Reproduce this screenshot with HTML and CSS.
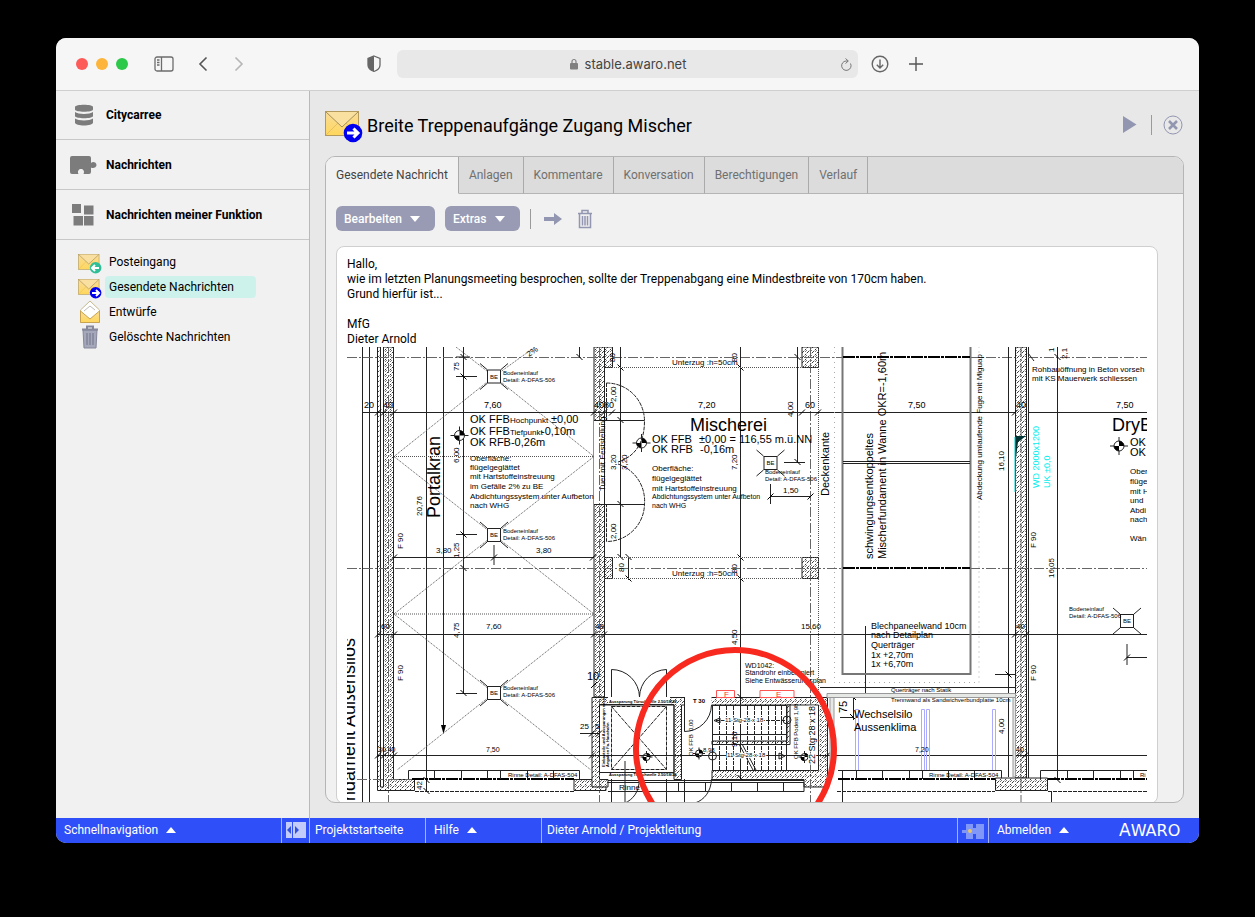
FILE: index.html
```html
<!DOCTYPE html>
<html lang="de">

<head>
    <meta charset="UTF-8">
    <meta name="viewport" content="width=device-width, initial-scale=1.0">
    <title>Breite Treppenaufgänge Zugang Mischer</title>
    <link rel="stylesheet" href="styles.css">
</head>

<body>
    <!-- shared icons -->
    <svg class="defs" width="0" height="0" aria-hidden="true">
        <defs>
            <linearGradient id="paper" x1="0" y1="0" x2="0" y2="1">
                <stop offset="0" stop-color="#f8dc9a" />
                <stop offset="1" stop-color="#ffd75c" />
            </linearGradient>
            <symbol id="mail" viewBox="0 0 38 32">
                <rect x="0.5" y="0.5" width="33" height="24" fill="url(#paper)" stroke="#b39a5c" />
                <path d="M1 24L13 12M33 24L21 12" stroke="#e9c061" fill="none" />
                <path d="M1 1L17 16L33 1" fill="#f9e0a0" stroke="#a58f5a" />
                <circle cx="28" cy="22" r="9.300" fill="currentColor" />
            </symbol>
        </defs>
    </svg>

    <div class="window">
        <header class="browser-bar">
            <div class="lights"><i class="red"></i><i class="yellow"></i><i class="green"></i></div>
            <button class="bar-btn sidebar-btn" aria-label="Seitenleiste">
                <svg width="20" height="16" fill="none" stroke="#6c6c6c" stroke-width="1.3">
                    <rect x="1" y="1" width="18" height="14" rx="2" />
                    <path d="M7.500 1V15M3 4H5.500M3 6.500H5.500M3 9H5.500" />
                </svg>
            </button>
            <button class="bar-btn" aria-label="Zurück">
                <svg width="10" height="16" fill="none" stroke="#555" stroke-width="1.600">
                    <path d="M8.500 1.500L2 8L8.500 14.500" />
                </svg>
            </button>
            <button class="bar-btn" aria-label="Vor">
                <svg width="10" height="16" fill="none" stroke="#b5b5b5" stroke-width="1.600">
                    <path d="M1.500 1.500L8 8L1.500 14.500" />
                </svg>
            </button>
            <button class="bar-btn shield" aria-label="Datenschutz">
                <svg width="16" height="18">
                    <path d="M8 1L14 3.500V10C14 13 11 15.500 8 16.500C5 15.500 2 13 2 10V3.500Z" fill="none" stroke="#666" stroke-width="1.300" />
                    <path d="M8 1L2 3.500V10C2 13 5 15.500 8 16.500Z" fill="#666" />
                </svg>
            </button>
            <div class="address">
                <svg width="10" height="12" fill="#808080">
                    <rect x="1" y="5" width="8" height="6.500" rx="1" />
                    <path d="M3 5V3.500A2 2 0 0 1 7 3.500V5" fill="none" stroke="#808080" stroke-width="1.200" />
                </svg>
                <span>stable.awaro.net</span>
                <button class="reload" aria-label="Neu laden">
                    <svg width="12" height="13" fill="none" stroke="#777">
                        <path d="M10.500 5.500A4.700 4.700 0 1 1 6 3H8M5.500 0.500L8.300 3L5.500 5.500" />
                    </svg>
                </button>
            </div>
            <button class="bar-btn" aria-label="Downloads">
                <svg width="18" height="18" fill="none" stroke="#666" stroke-width="1.400">
                    <circle cx="9" cy="9" r="7.800" />
                    <path d="M9 4.500V13M5.800 9.800L9 13L12.200 9.800" />
                </svg>
            </button>
            <button class="bar-btn plus" aria-label="Neuer Tab">
                <svg width="14" height="14" stroke="#555" stroke-width="1.400">
                    <path d="M7 0V14M0 7H14" />
                </svg>
            </button>
        </header>

        <div class="app">
            <nav class="sidebar">
                <a class="section" href="#">
                    <svg width="28" height="24" fill="#7c7c7c">
                        <path d="M5 4C5 1 23 1 23 4V6.500C23 9.500 5 9.500 5 6.500ZM5 9C8 11.500 20 11.500 23 9V13C23 16 5 16 5 13ZM5 15.500C8 18 20 18 23 15.500V19.500C23 23.500 5 23.500 5 19.500Z" />
                    </svg>
                    Citycarree
                </a>
                <a class="section" href="#">
                    <svg width="28" height="24" fill="#7c7c7c">
                        <path d="M2 3H19Q21 3 21 5V10C23 8 26.500 9.500 26.500 12S23 16 21 14.500V19Q21 21 19 21H13.500C15 18 13 16 11 16S7 18 8.500 21H2Q0 21 0 19V5Q0 3 2 3Z" />
                    </svg>
                    Nachrichten
                </a>
                <a class="section" href="#">
                    <svg width="28" height="24" fill="#7c7c7c">
                        <path d="M2 1H11V10H2ZM14 2.500H23.500V11.500H14ZM3.500 13H13V22.500H3.500ZM14 13H23.500V22.500H14Z" />
                    </svg>
                    Nachrichten meiner Funktion
                </a>
                <ul class="folders">
                    <li><a href="#">
                        <svg class="mail in" width="24" height="20"><use href="#mail" /><path d="M14 14H21M17 11L14 14L17 17" fill="none" stroke="#fff" stroke-width="2" /></svg>
                        <span>Posteingang</span></a></li>
                    <li class="current"><a href="#">
                        <svg class="mail out" width="24" height="20"><use href="#mail" /><path d="M14 14H21M18 11L21 14L18 17" fill="none" stroke="#fff" stroke-width="2" /></svg>
                        <span>Gesendete Nachrichten</span></a></li>
                    <li><a href="#">
                        <svg width="24" height="24">
                            <path d="M2.500 10L12 1L21.500 10V22.500H2.500Z" fill="#fff" stroke="#c7b98e" />
                            <path d="M6 11L12 6L17 10" fill="none" stroke="#bbb" />
                            <path d="M2.500 11L12 19L21.500 11V22.500H2.500Z" fill="url(#paper)" stroke="#c9a450" />
                        </svg>
                        <span>Entwürfe</span></a></li>
                    <li><a href="#">
                        <svg width="24" height="24">
                            <path d="M5 5H19L18 23H6Z" fill="#a5a8ba" stroke="#85879a" />
                            <path d="M4 4.500H20M9 4V1.500H15V4" fill="none" stroke="#85879a" stroke-width="2" />
                            <path d="M9 8V20M12 8V20M15 8V20" stroke="#70738a" />
                        </svg>
                        <span>Gelöschte Nachrichten</span></a></li>
                </ul>
            </nav>

            <main class="content">
                <div class="title-row">
                    <svg class="mail out" width="38" height="32"><use href="#mail" /><path d="M22 22H33M28.500 17.500L33 22L28.500 26.500" fill="none" stroke="#fff" stroke-width="3" /></svg>
                    <h1>Breite Treppenaufgänge Zugang Mischer</h1>
                    <button class="icon-btn" aria-label="Weiter">
                        <svg width="14" height="18"><path d="M0 0V17L13.500 8.500Z" fill="#9296b0" /></svg>
                    </button>
                    <span class="divider"></span>
                    <button class="icon-btn" aria-label="Schließen">
                        <svg width="20" height="20" fill="none" stroke="#9296b0">
                            <circle cx="10" cy="10" r="9" />
                            <path d="M6 6L14 14M14 6L6 14" stroke-width="2.600" />
                        </svg>
                    </button>
                </div>

                <section class="panel">
                    <nav class="tabs">
                        <a class="active" href="#">Gesendete Nachricht</a>
                        <a href="#">Anlagen</a>
                        <a href="#">Kommentare</a>
                        <a href="#">Konversation</a>
                        <a href="#">Berechtigungen</a>
                        <a href="#">Verlauf</a>
                    </nav>
                    <div class="toolbar">
                        <button class="menu-btn">Bearbeiten <i class="down"></i></button>
                        <button class="menu-btn">Extras <i class="down"></i></button>
                        <span class="divider"></span>
                        <button class="icon-btn" aria-label="Weiterleiten">
                            <svg width="20" height="14"><path d="M1 5H11V1L19 7L11 13V9H1Z" fill="#9296b0" /></svg>
                        </button>
                        <button class="icon-btn" aria-label="Löschen">
                            <svg width="16" height="20" fill="none" stroke="#9296b0" stroke-width="1.500">
                                <path d="M1 4.500H15M5 4V1.500H11V4M2.500 5V18.500H13.500V5M5.500 7V16.500M8 7V16.500M10.500 7V16.500" />
                            </svg>
                        </button>
                    </div>
                    <article class="message">
                        <p>Hallo,<br>
                            wie im letzten Planungsmeeting besprochen, sollte der Treppenabgang eine Mindestbreite von 170cm haben.<br>
                            Grund hierfür ist...</p>
                        <p>MfG<br>Dieter Arnold</p>

                        <svg class="plan" viewBox="347 347 800 456" preserveAspectRatio="xMinYMin slice" role="img" aria-label="Grundriss">
                            <defs>
                                <pattern id="hatch" width="5" height="5" patternUnits="userSpaceOnUse">
                                    <rect width="5" height="5" fill="#fff" />
                                    <path d="M-1 6L6 -1" stroke="#222" stroke-width="0.900" stroke-dasharray="3 1" />
                                    <path d="M0 2L2 0" stroke="#444" stroke-width="0.700" />
                                </pattern>
                                <path id="tick" d="M-3 3L3 -3" />
                                <path id="tock" d="M-3 -3L3 3" />
                                <g id="drain">
                                    <path class="l" d="M-14 -13L-7 -7M14 -13L7 -7M-14 13L-7 7M14 13L7 7" />
                                    <rect class="w" x="-6.500" y="-6.500" width="13" height="13" />
                                    <text class="t6" x="-4" y="2">BE</text>
                                </g>
                                <g id="level">
                                    <path class="l" d="M-9 0H9M0 -9V9" />
                                    <circle class="w" r="5" />
                                    <path class="k" d="M0 0V-5A5 5 0 0 1 5 0ZM0 0V5A5 5 0 0 1 -5 0Z" />
                                </g>
                                <g id="level-small">
                                    <path class="l" d="M-6 0H6M0 -6V6" />
                                    <circle class="w" r="3.500" />
                                    <path class="k" d="M0 0V-4A4 4 0 0 1 4 0ZM0 0V4A4 4 0 0 1 -4 0Z" />
                                </g>
                            </defs>

                            <!-- walls -->
                            <g class="wall">
                                <path d="M377.500 347V790.500H414.500V779.500H393.500V347H383.500V787H380.500V347Z" />
                                <path d="M594 347H604.500V697H594Z" />
                                <path d="M604.500 347H612.500V367.500H604.500ZM604.500 557.500H612.500V578.500H604.500Z" />
                                <path d="M802 347H818.500V367.500H802ZM802 557.500H818.500V578.500H802Z" />
                                <path d="M1015.500 347H1026.500V778H1015.500Z" />
                                <path d="M995.500 778H1047.500V790.500H995.500Z" />
                                <path d="M574 779.500H606V790.500H574Z" />
                                <path d="M592 697.500H827.500V787H804V779.500H712V770.500H818.500V705H681.500V779.500H674V705H599.500V779.500H608V787H592Z" />
                                <path d="M712 741H787V705H790V744.500H712Z" />
                            </g>
                            <path class="w none" d="M684.500 696H711.500V706H684.500ZM608 696H670V705H608ZM594 420.500H604.500V504.500H594Z" />

                            <!-- left hall -->
                            <path class="l" d="M362.500 347V803M369.500 347V803M426.500 347V792M443.500 347V728M463.500 347V694M1028.500 347V778" />
                            <path class="k" d="M441 725H446L443.500 734Z" />
                            <path class="l dd" d="M388.500 347V803M599.500 347V803M347 357.500H604M612 357.500H842M970 357.500H1015M1028 357.500H1147M347 568.500H842M970 568.500H1147M357 779.500H412M810.500 347V803M1021 347V803" />
                            <path class="dot" d="M394 456.500H594M394 614H594M456 347L494 376.500L535 347M494 376.500L394 456.500L494 535L394 614L494 693L397 770M494 376.500L594 456.500L494 535L594 614L494 693L591 770" />
                            <use href="#drain" x="494" y="376.500" />
                            <use href="#drain" x="494" y="535" />
                            <use href="#drain" x="494" y="693" />
                            <use href="#drain" x="770.500" y="463" />
                            <use href="#drain" x="1127" y="621" />
                            <use href="#level" x="459.500" y="435.500" />
                            <use href="#level" x="641.500" y="443" />
                            <use href="#level" x="1119" y="446" />
                            <use href="#level-small" x="646.500" y="757" />
                            <use href="#level-small" x="699" y="753.500" />
                            <use href="#level-small" x="804.500" y="757" />

                            <!-- dimension chains -->
                            <path class="l" d="M362.500 412.500H1015M1028 412.500H1147M377 634.500H1147M377 755.500H1147M394 557.500H594M456 376.500H477M456 534.500H477M456 693.500H477M494 545V565M456 357H470" />
                            <path class="l" d="M620.500 347V557M740.500 347V780M797.500 347V462M784 462.500H805M770.500 484V504M770.500 496.500H811M628.500 557V580M1008.500 347V777M1057.500 347V780M1127 644V665M1127 657.500H1147M995 674.500H1015M840 717.500H853M853.500 697V720M865.500 626V693M579.500 347V357M580 733.500H600M1051.500 791V803M842.500 770V803M625 761V803" />
                            <g class="tick">
                                <use href="#tick" x="378" y="412.500" /><use href="#tick" x="384" y="412.500" /><use href="#tick" x="394" y="412.500" />
                                <use href="#tick" x="594" y="412.500" /><use href="#tick" x="604" y="412.500" /><use href="#tick" x="612" y="412.500" />
                                <use href="#tick" x="802" y="412.500" /><use href="#tick" x="818" y="412.500" /><use href="#tick" x="1015" y="412.500" />
                                <use href="#tick" x="394" y="557.500" /><use href="#tick" x="494" y="557.500" /><use href="#tick" x="593" y="557.500" />
                                <use href="#tick" x="378" y="634.500" /><use href="#tick" x="394" y="634.500" /><use href="#tick" x="594" y="634.500" /><use href="#tick" x="604" y="634.500" />
                                <use href="#tick" x="1015" y="634.500" /><use href="#tick" x="1026" y="634.500" />
                                <use href="#tick" x="378" y="755.500" /><use href="#tick" x="384" y="755.500" /><use href="#tick" x="394" y="755.500" />
                                <use href="#tick" x="592" y="755.500" /><use href="#tick" x="827" y="755.500" /><use href="#tick" x="1017" y="755.500" /><use href="#tick" x="1025" y="755.500" />
                                <use href="#tick" x="770.500" y="496.500" /><use href="#tick" x="810.500" y="496.500" /><use href="#tick" x="592" y="733.500" /><use href="#tick" x="599" y="733.500" />
                                <use href="#tick" x="594" y="685" /><use href="#tick" x="1127" y="657.500" />
                                <use href="#tock" x="463.500" y="357" /><use href="#tock" x="463.500" y="376.500" /><use href="#tock" x="463.500" y="534.500" />
                                <use href="#tock" x="463.500" y="568" /><use href="#tock" x="463.500" y="693" /><use href="#tock" x="426.500" y="780" /><use href="#tock" x="426.500" y="791" />
                                <use href="#tock" x="620.500" y="367.500" /><use href="#tock" x="620.500" y="420" /><use href="#tock" x="620.500" y="504" /><use href="#tock" x="620.500" y="557" />
                                <use href="#tock" x="628.500" y="557" /><use href="#tock" x="628.500" y="578.500" /><use href="#tock" x="740.500" y="367.500" /><use href="#tock" x="740.500" y="557.500" />
                                <use href="#tock" x="740.500" y="578.500" /><use href="#tock" x="740.500" y="697" /><use href="#tock" x="740.500" y="778" /><use href="#tock" x="797.500" y="357" />
                                <use href="#tock" x="797.500" y="462" /><use href="#tock" x="1008.500" y="674.500" /><use href="#tock" x="1057.500" y="357" /><use href="#tock" x="1057.500" y="780" />
                                <use href="#tock" x="853" y="697" /><use href="#tock" x="853" y="717" /><use href="#tock" x="579.500" y="357" />
                            </g>

                            <!-- mixing hall -->
                            <path class="dot" d="M604 367.500H818.500V697M604 557.500H818.500M604 578.500H818.500M818.500 347V368" />
                            <path class="l" d="M594 420.500H644.500M594 504.500H644.500M604.500 347V557" />
                            <path class="l dash" d="M606.500 383V420M606.500 383A38 38 0 0 1 644.500 421C644.500 444 634 457 618 462M618 464A39 39 0 0 1 644.500 504A38 38 0 0 1 606.500 541.500V505" />
                            <path class="faint" d="M834.500 347V682.500H979V347" />
                            <path class="g" d="M842.500 347V674H970.500V347" />
                            <path class="l" d="M843 461.500H970M843 463.500H970" />
                            <path class="thick" d="M843 357H970M843 568H970M412 779H574M838 779H995M1048 779H1147" />

                            <!-- gutters -->
                            <path class="l" d="M408.500 779V770.500H579.500V779M434.500 770.500V779M461.500 770.500V779M487.500 770.500V779M500.500 770.500V779M527.500 770.500V779M553.500 770.500V779" />
                            <path class="l" d="M838 770.500H1001.500V778M856.500 770.500V779M882.500 770.500V779M909.500 770.500V779M922.500 770.500V779M948.500 770.500V779M974.500 770.500V779" />
                            <path class="l" d="M1147 770.500H1040.500V779M1067.500 770.500V779M1093.500 770.500V779M1120.500 770.500V779M1133.500 770.500V779" />
                            <path class="l" d="M608 780.500H804M608 782.500H804V791.500H608M678.500 783V791M705.500 783V791M731.500 783V791M757.500 783V791M783.500 783V791" />
                            <path class="l dash" d="M415 791.500H574M837 791.500H995M1048 791.500H1147" />

                            <!-- lift and stairs -->
                            <path class="l" d="M611.500 697V669.500A28 28 0 0 1 639.500 697A28 28 0 0 1 666.500 669.500V697M599.500 704.500H674V772.500H599.500ZM684.500 697V731.500A27 27 0 0 0 711.500 705M684.500 779V803M711.500 779C711 792 704 800 695 803M611.500 779V803M666.500 779V803M639 779C640 792 632 800 625 803" />
                            <path class="l dash" d="M611.500 706.500H666.500V769.500H611.500ZM611.500 706.500L666.500 769.500M666.500 706.500L611.500 769.500" />
                            <path class="l" d="M712.500 705V770.500H786.500V705.500H712.500M712.500 734.500H787" />
                            <path class="l dash" d="M719.500 706V770M726.500 706V770M733.500 706V770M740.500 706V770M747.500 706V770M754.500 706V770M761.500 706V770M768.500 706V770M775.500 706V770M781.500 706V770M716 720.500H785M716 755.500H785" />
                            <path class="l" d="M739 744L753 770M742 744L756 770M714 720.500L720 718V723ZM779 753V759L785 756Z" />
                            <circle class="l" cx="712.500" cy="756" r="4" /><circle class="l" cx="787" cy="720" r="4" />
                            <path class="red-box" d="M716.500 690.500H734.500V697.500H716.500ZM760 690.500H794V697.500H760Z" />

                            <!-- silo -->
                            <path class="band" d="M827 693.500H1015.500V697.500H827ZM830 697.500H834V770H830ZM1013 697.500H1015.500V777H1013Z" />
                            <path class="l" d="M820 687.500H1015M1028 353L1034 361" />
                            <path class="blue" d="M855.500 770V709.500H858.500V770M921.500 770V709.500H924.500V770M926.500 770V709.500H929.500V770M992.500 770V709.500H995.500V770" />
                            <path fill="#033" d="M1015 436H1026L1018 442L1016 458V488H1015Z" />
                            <path stroke="#0cc" d="M1015 437V492" />

                            <!-- lettering -->
                            <g class="t9">
                                <text x="364" y="408">20</text><text x="383" y="408">40</text><text x="484" y="408">7,60</text>
                                <text x="594" y="408">40</text><text x="604" y="408">80</text><text x="698" y="408">7,20</text><text x="805" y="408">60</text>
                                <text x="908" y="408">7,50</text><text x="1016" y="408">40</text><text x="1116" y="408">7,50</text>
                                <text x="871" y="629">Blechpaneelwand 10cm</text><text x="871" y="638">nach Detailplan</text><text x="871" y="648">Querträger</text>
                                <text x="871" y="658">1x +2,70m</text><text x="871" y="667">1x +6,70m</text>
                            </g>
                            <g class="t8">
                                <text x="1032" y="372">Rohbauöffnung in Beton vorseh</text><text x="1032" y="381">mit KS Mauerwerk schliessen</text>
                                <text x="436" y="553">3,80</text><text x="536" y="553">3,80</text><text x="486" y="629">7,60</text><text x="381" y="629">60</text><text x="595" y="629">48</text>
                                <text x="801" y="629">15,60</text><text x="1016" y="629">40</text><text x="783" y="493">1,50</text><text x="580" y="729">25</text><text x="595" y="729">5</text>
                                <text x="672" y="365">Unterzug :h=50cm</text><text x="672" y="576">Unterzug :h=50cm</text>
                                <text x="470" y="461">Oberfläche:</text><text x="470" y="470">flügelgeglättet</text><text x="470" y="479">mit Hartstoffeinstreuung</text>
                                <text x="470" y="489">im Gefälle 2% zu BE</text><text x="470" y="499">Abdichtungssystem unter Aufbeton</text><text x="470" y="508">nach WHG</text>
                                <text x="652" y="471">Oberfläche:</text><text x="652" y="481">flügelgeglättet</text><text x="652" y="491">mit Hartstoffeinstreuung</text>
                                <text x="1130" y="474">Ober</text><text x="1130" y="484">flüge</text><text x="1130" y="494">mit H</text>
                                <text x="1130" y="503">und</text><text x="1130" y="513">Abdi</text><text x="1130" y="522">nach</text><text x="1130" y="541">Wän</text>
                                <text x="619" y="790">Rinne</text>
                            </g>
                            <g class="t7">
                                <text x="652" y="499">Abdichtungssystem unter Aufbeton</text><text x="652" y="508">nach WHG</text>
                                <text x="745" y="668">WD1042:</text><text x="745" y="675">Standrohr einbetoniert</text><text x="745" y="683">Siehe Entwässerungsplan</text>
                                <text x="486" y="752">7,50</text><text x="915" y="752">7,20</text><text x="378" y="752">30 40</text><text x="1016" y="752">40</text>
                            </g>
                            <g class="t6">
                                <text x="503" y="375">Bodeneinlauf</text><text x="503" y="382">Detail: A-DFAS-506</text>
                                <text x="503" y="533">Bodeneinlauf</text><text x="503" y="540">Detail: A-DFAS-506</text>
                                <text x="503" y="690">Bodeneinlauf</text><text x="503" y="697">Detail: A-DFAS-506</text>
                                <text x="765" y="474">Bodeneinlauf</text><text x="765" y="481">Detail: A-DFAS-506</text>
                                <text x="1069" y="611">Bodeneinlauf</text><text x="1069" y="618">Detail: A-DFAS-506</text>
                                <text x="508" y="777">Rinne Detail: A-DFAS-504</text><text x="929" y="777">Rinne Detail: A-DFAS-504</text><text x="1140" y="777">Ri</text>
                                <text x="891" y="692">Querträger nach Statik</text><text x="891" y="702">Trennwand als Sandwichverbundplatte 10cm</text>
                                <text class="halo" x="725" y="722">11 Stg 28 x 18</text><text class="halo" x="727" y="757">11 Stg 28 x 18</text><text x="703" y="752">8,98</text>
                            </g>
                            <g class="t4"><text x="609" y="703">Aussparung Türschwelle 2.50/18/20</text><text x="609" y="776">Aussparung Türschwelle 2.50/18/20</text></g>
                            <text class="t6 bold" x="693" y="703">T 30</text>
                            <text class="t8 redtext" x="724" y="697">F</text><text class="t8 redtext" x="776" y="697">E</text>
                            <g class="t11">
                                <text x="470" y="423">OK FFB</text><text class="t8" x="510" y="423">Hochpunkt</text><text x="551" y="423">±0,00</text>
                                <text x="470" y="435">OK FFB</text><text class="t8" x="510" y="435">Tiefpunkt</text><text x="541" y="435">-0,10m</text>
                                <text x="470" y="446">OK RFB-0,26m</text>
                                <text x="652" y="443">OK FFB</text><text x="699" y="443">±0,00 = 116,55 m.ü.NN</text>
                                <text x="652" y="453">OK RFB</text><text x="700" y="453">-0,16m</text>
                                <text x="1130" y="446">OK</text><text x="1130" y="456">OK</text>
                                <text x="854" y="718">Wechselsilo</text><text x="854" y="731">Aussenklima</text><text x="587" y="680">10</text>
                            </g>
                            <text class="t18" x="690" y="431">Mischerei</text>
                            <text class="t18" x="1112" y="431">DryB</text>

                            <!-- upright lettering -->
                            <text class="t18" transform="translate(440 518) rotate(-90)">Portalkran</text>
                            <text class="t18" text-anchor="end" transform="translate(355 638) rotate(-90)">ndament Außensilos</text>
                            <g class="t11">
                                <text transform="translate(829 496) rotate(-90)">Deckenkante</text>
                                <text transform="translate(873 559) rotate(-90)">schwingungsentkoppeltes</text>
                                <text transform="translate(886 559) rotate(-90)">Mischerfundament in Wanne OKR=-1,60m</text>
                                <text transform="translate(847 713) rotate(-90)">75</text>
                            </g>
                            <g class="t9">
                                <text class="halo" transform="translate(815 764) rotate(-90)">22 Stg 28 x 18</text>
                                <text class="cyan" transform="translate(1039 488) rotate(-90)">WD 2000x1200</text>
                                <text class="cyan" transform="translate(1050 488) rotate(-90)">UK ±0,0</text>
                            </g>
                            <g class="t8">
                                <text transform="translate(982 500) rotate(-90)">Abdeckung umlaufende Fuge mit Miguap</text>
                                <text transform="translate(605 491) rotate(-90)">Tuer mit Feststellung</text>
                                <text transform="translate(459 371) rotate(-90)">75</text><text transform="translate(459 463) rotate(-90)">6,00</text>
                                <text transform="translate(422 516) rotate(-90)">20,76</text><text transform="translate(459 558) rotate(-90)">1,25</text>
                                <text transform="translate(403 549) rotate(-90)">F 90</text><text transform="translate(403 681) rotate(-90)">F 90</text>
                                <text transform="translate(459 638) rotate(-90)">4,75</text><text transform="translate(422 790) rotate(-90)">42</text>
                                <text transform="translate(616 402) rotate(-90)">2,00</text><text transform="translate(616 470) rotate(-90)">3,20</text>
                                <text transform="translate(627 470) rotate(-90)">3,20</text><text transform="translate(616 539) rotate(-90)">2,00</text>
                                <text transform="translate(615 362) rotate(-90)">80</text><text transform="translate(737 362) rotate(-90)">80</text>
                                <text transform="translate(624 572) rotate(-90)">80</text><text transform="translate(737 573) rotate(-90)">80</text>
                                <text transform="translate(737 470) rotate(-90)">7,20</text><text transform="translate(793 417) rotate(-90)">4,00</text>
                                <text transform="translate(737 645) rotate(-90)">4,50</text><text transform="translate(737 747) rotate(-90)">9,10</text>
                                <text transform="translate(1004 471) rotate(-90)">16,10</text><text transform="translate(1054 578) rotate(-90)">16,05</text>
                                <text transform="translate(1036 548) rotate(-90)">F 90</text><text transform="translate(1036 681) rotate(-90)">F 90</text>
                                <text transform="translate(1004 734) rotate(-90)">4,00</text><text transform="translate(1054 352) rotate(-90)">1</text>
                                <text transform="translate(1067 359) rotate(-90)">2,1</text><text transform="translate(529 357) rotate(-35)">2%</text>
                            </g>
                            <g class="t6">
                                <text transform="translate(693 756) rotate(-90)">OK FFB&#160; 0,00</text>
                                <text transform="translate(798 759) rotate(-90)">OK FFB Podest 1,98</text>
                            </g>
                            <g class="t4">
                                <text transform="translate(605 767) rotate(-90)">Einbauteile und Aussparungen nach</text>
                                <text transform="translate(609 767) rotate(-90)">Angaben Fa. Haushahn</text>
                            </g>

                            <circle class="marker" cx="735" cy="749" r="99" />
                        </svg>
                    </article>
                </section>
            </main>
        </div>

        <footer class="status">
            <button class="quick">Schnellnavigation <i class="up"></i></button>
            <button class="toggle" aria-label="Navigation umschalten">
                <svg width="20" height="16"><path d="M0 0H6V16H0ZM7 0H20V16H7Z" fill="#c3cbfa" /><path d="M5 4V12L1 8ZM9 4V12L13 8Z" fill="#3150dd" /></svg>
            </button>
            <a class="start" href="#">Projektstartseite</a>
            <button class="help">Hilfe <i class="up"></i></button>
            <span class="user">Dieter Arnold / Projektleitung</span>
            <span class="plug">
                <svg width="22" height="16"><path d="M4 1H11V5H14V1H22V16H14V11H11V16H4V10H0V7H4Z" fill="#8298f8" /><circle cx="8" cy="8" r="2" fill="#e8c66a" /></svg>
            </span>
            <button class="logout">Abmelden <i class="up"></i></button>
            <span class="brand"><b>A</b>WARO</span>
        </footer>
    </div>
</body>

</html>
```
FILE: styles.css
```css
/* General */
* {
    box-sizing: border-box;
}

body {
    margin: 0;
    padding: 38px 56px 74px;
    background-color: #000;
    font-family: Roboto, 'Liberation Sans', sans-serif;
    font-size: 12px;
    color: #000;
}

button {
    padding: 0;
    border: none;
    background: none;
    font: inherit;
    color: inherit;
    cursor: pointer;
}

a {
    color: inherit;
    text-decoration: none;
}

svg {
    display: block;
    flex: none;
}

.defs {
    position: absolute;
}

.window {
    display: flex;
    flex-direction: column;
    height: calc(100vh - 112px);
    border-radius: 10px;
    overflow: hidden;
    background-color: #e8e8e8;
}

/* Browser bar */
.browser-bar {
    display: flex;
    align-items: center;
    flex: none;
    height: 53px;
    padding: 0 20px;
    background-color: #f6f6f6;
    border-bottom: 1px solid #cfcfcf;
}

.lights {
    display: flex;
    gap: 8px;
    margin-right: 24px;
}

.lights i {
    width: 12px;
    height: 12px;
    border-radius: 50%;
}

.red {
    background-color: #fc5b57;
}

.yellow {
    background-color: #fdb43a;
}

.green {
    background-color: #2bc84a;
}

.bar-btn {
    margin: 0 2px;
}

.sidebar-btn {
    margin-right: 22px;
}

.sidebar-btn + .bar-btn {
    margin-right: 24px;
}

.shield {
    margin-left: auto;
}

.address {
    position: relative;
    display: flex;
    align-items: center;
    justify-content: center;
    gap: 6px;
    width: 461px;
    height: 28px;
    margin: 0 11px 0 13px;
    border-radius: 6px;
    background-color: #e8e8e8;
    font: 13px Inter, sans-serif;
    color: #444;
}

.reload {
    position: absolute;
    right: 6px;
}

.plus {
    margin-left: 18px;
    margin-right: 256px;
}

/* Sidebar */
.app {
    display: flex;
    flex: 1;
    min-height: 0;
}

.sidebar {
    width: 254px;
    flex: none;
    background-color: #f1f1f1;
    border-right: 1px solid #b9b9b9;
}

.section {
    display: flex;
    align-items: center;
    gap: 8px;
    height: 50px;
    padding: 0 14px;
    border-bottom: 1px solid #c8c8c8;
    font-weight: bold;
}

.section:first-child {
    height: 49px;
}

.folders {
    margin: 0;
    padding: 9px 0 0 22px;
    list-style: none;
}

.folders a {
    display: flex;
    align-items: center;
    gap: 3px;
    height: 25px;
}

.folders span {
    width: 151px;
    padding: 4px;
    border-radius: 4px;
}

.mail {
    margin-top: 4px;
}

.current span {
    background-color: #cdf2ec;
}

.in {
    color: #2fbf98;
}

.out {
    color: #0000f0;
}

/* Content */
.content {
    display: flex;
    flex-direction: column;
    flex: 1;
    min-width: 0;
    padding: 15px;
}

.title-row {
    display: flex;
    align-items: center;
    flex: none;
    height: 38px;
    margin-bottom: 12px;
    padding-right: 1px;
}

h1 {
    flex: 1;
    margin: 0 0 0 4px;
    font-size: 18px;
    font-weight: normal;
}

.divider {
    width: 1px;
    height: 20px;
    background-color: #9a9a9a;
}

.title-row .divider {
    margin: 0 11px 0 14px;
}

.panel {
    flex: 1;
    min-height: 0;
    overflow: hidden;
    border: 1px solid #b5b5b5;
    border-radius: 10px;
    background-color: #f1f1f1;
}

.tabs {
    display: flex;
    height: 37px;
    background-color: #dcdcdc;
    color: #707070;
}

.tabs::after {
    content: "";
    flex: 1;
    border-bottom: 1px solid #b5b5b5;
}

.tabs a {
    padding: 0 10px;
    line-height: 36px;
    border-right: 1px solid #aaa;
    border-bottom: 1px solid #b5b5b5;
}

.tabs .active {
    background-color: #f1f1f1;
    border-bottom-color: #f1f1f1;
    color: #444;
}

.toolbar {
    display: flex;
    align-items: center;
    gap: 10px;
    height: 49px;
    padding: 0 10px;
}

.toolbar .icon-btn {
    margin: 0 2px;
}

.menu-btn {
    height: 25px;
    padding: 0 15px 0 8px;
    border-radius: 6px;
    background-color: #989bb3;
    color: #fff;
    font-weight: 500;
}

.down,
.up {
    display: inline-block;
    margin-left: 5px;
    border: 5px solid transparent;
    vertical-align: 1px;
}

.down {
    border-top: 6px solid #fff;
    border-bottom: 0;
}

.up {
    border-bottom: 6px solid #fff;
    border-top: 0;
}

.message {
    margin: 3px 25px 0 10px;
    padding: 10px 10px 0;
    border: 1px solid #cfcfcf;
    border-radius: 8px;
    background-color: #fff;
    line-height: 15px;
}

.message p {
    margin: 0 0 15px;
}

.message p + p {
    margin-bottom: 0;
}

/* Floor plan */
.plan {
    width: 100%;
    height: auto;
    overflow: hidden;
    font-family: 'Liberation Sans', Arial, sans-serif;
}

.wall {
    fill: url(#hatch);
    stroke: #222;
    stroke-width: 1;
}

.l {
    fill: none;
    stroke: #222;
    stroke-width: 1;
}

.w {
    fill: #fff;
    stroke: #222;
}

.none {
    stroke: none;
}

.k {
    fill: #000;
}

.dd {
    stroke: #666;
    stroke-dasharray: 10 2 2 2;
}

.dash {
    stroke-dasharray: 4 1;
}

.dot {
    fill: none;
    stroke: #555;
    stroke-width: 1;
    stroke-dasharray: 1 1;
}

.faint {
    fill: none;
    stroke: #aaa;
    stroke-dasharray: 1 4;
}

.g {
    fill: none;
    stroke: #777;
    stroke-width: 2;
}

.thick {
    stroke: #000;
    stroke-width: 2;
    stroke-dasharray: 12 1 3 1;
}

.tick {
    stroke: #000;
    stroke-width: 1;
}

.red-box {
    fill: none;
    stroke: #f55;
}

.redtext {
    fill: #f33;
}

.blue {
    fill: none;
    stroke: #aaf;
}

.cyan {
    fill: #0ee;
}

.band {
    fill: #e6e8e6;
    stroke: #999;
}

.halo {
    paint-order: stroke;
    stroke: #fff;
    stroke-width: 2;
}

.marker {
    fill: none;
    stroke: #f8291e;
    stroke-width: 6;
}

.t4 { font-size: 4px; font-weight: bold; }
.t6 { font-size: 6px; }
.t7 { font-size: 7px; }
.t8 { font-size: 8px; }
.t9 { font-size: 9px; }
.t11 { font-size: 11px; }
.t18 { font-size: 18px; }

.bold {
    font-weight: bold;
}

/* Status bar */
.status {
    display: flex;
    flex: none;
    height: 25px;
    background-color: #2f50f8;
    color: #fff;
    line-height: 24px;
}

.status > * {
    padding: 0 5px;
    border-right: 1px solid #a5b3fb;
    text-align: left;
}

.status button {
    padding-bottom: 1px;
}

.status .quick {
    width: 226px;
    padding-left: 8px;
}

.status .toggle {
    width: 28px;
    padding-left: 4px;
}

.status .start {
    width: 116px;
}

.status .help {
    width: 116px;
    padding-left: 8px;
}

.status .user {
    flex: 1;
}

.status .plug {
    display: flex;
    align-items: center;
    width: 31px;
    padding: 0 4px;
}

.status .logout {
    width: 122px;
    padding-left: 8px;
    border: none;
}

.status .brand {
    width: 88px;
    padding: 0 0 0 8px;
    border: none;
    font-family: 'DejaVu Sans', sans-serif;
    font-size: 16px;
}

.brand b {
    font-size: 17px;
    font-weight: normal;
}
```
